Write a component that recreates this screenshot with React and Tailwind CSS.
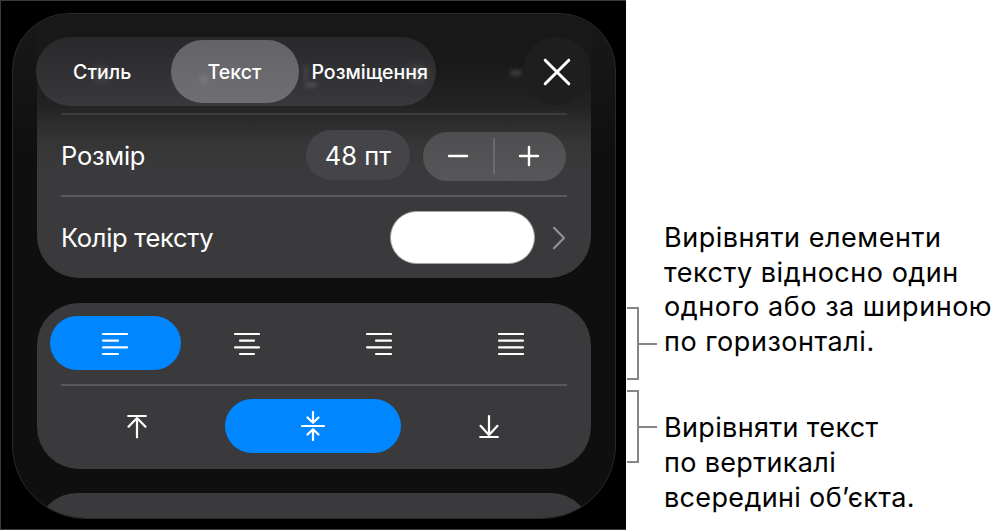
import React, { useState } from 'react';

const lineIcons = {
  left: [[1, 25], [1, 16], [1, 25], [1, 16]],
  center: [[1, 25], [6, 20], [1, 25], [6, 20]],
  right: [[1, 25], [10, 25], [1, 25], [10, 25]],
  justify: [[1, 25], [1, 25], [1, 25], [1, 25]]
};

const AlignIcon = ({ type }) => (
  <svg className="mt-px mr-0.5" width="26" height="24" viewBox="0 0 26 24" fill="none" stroke="white" strokeWidth="2.1" strokeLinecap="round">
    {lineIcons[type].map(([x1, x2], idx) => (
      <path key={idx} d={`M${x1} ${2 + idx * 6.67}H${x2}`} />
    ))}
  </svg>
);

const verticalPaths = {
  top: 'M6.2 5H23.8M15 26.3V7M6.5 15.7L15 7L23.5 15.7',
  middle: 'M4 15H26M15 1V11.5M9.5 6.5L15 11.8L20.5 6.5M15 29V18.5M9.5 23.5L15 18.2L20.5 23.5',
  bottom: 'M6.2 26H23.8M15 5V24M6.5 14.8L15 24L23.5 14.8'
};

const VerticalIcon = ({ type }) => (
  <svg width="30" height="30" viewBox="0 0 30 30" fill="none" stroke="white" strokeWidth="2.2" strokeLinecap="round" strokeLinejoin="round">
    <path d={verticalPaths[type]} />
  </svg>
);

const tabs = [
  { id: 'style', label: 'Стиль', style: 'w-[134.5px] tracking-[0.05px] pr-0.5' },
  { id: 'text', label: 'Текст', style: 'w-[128px] tracking-[0.1px]' },
  { id: 'layout', label: 'Розміщення', style: 'w-[136.5px] tracking-[0px] pl-1.5' }
];

const Bracket = () => (
  <div className="flex items-center">
    <div className="w-3 h-[73px] border-2 border-l-0 border-[#868686]" />
    <div className="w-[18px] h-0.5 bg-[#868686]" />
  </div>
);

const App = () => {
  const [tab, setTab] = useState('text');
  const [horizontal, setHorizontal] = useState('left');
  const [vertical, setVertical] = useState('middle');

  return (
    <div className="flex w-[1003px] h-[532px] bg-white overflow-hidden font-['Inter',sans-serif]">
      <div className="w-[626px] h-[530px] shrink-0 bg-black border border-r-0 border-[#3b3b3b] pl-[11px] pt-3">
        <div className="w-[604px] h-[506px] rounded-t-[57px] rounded-b-[74px] border border-[#292929] bg-[linear-gradient(#181818,#151515_60px,#0f0f0f_140px)] overflow-hidden px-6 text-white">
          {/* Header and text options */}
          <div className="h-[264px] rounded-b-[42px] bg-[linear-gradient(#181818,#191919_50px,#232323_92px,#2c2c2d_108px,#353536_128px,#3a3a3c_155px)] pt-[23px]">
            <div className="relative flex justify-between -ml-px">
              <div className="flex items-center w-[400px] h-[69px] rounded-[35px] bg-gradient-to-b from-[#29292b] to-[#39393d]">
                {tabs.map((item) => (
                  <button
                    key={item.id}
                    onClick={() => setTab(item.id)}
                    className={`relative z-10 h-[63px] shrink-0 rounded-[32px] text-[19.5px] font-medium whitespace-nowrap pt-0.5 ${item.style} ${
                      tab === item.id ? 'bg-gradient-to-b from-[#646468] to-[#6e6e73]' : ''
                    }`}
                  >
                    {item.label}
                  </button>
                ))}
              </div>
              <button className="relative z-10 flex items-center justify-center w-[68px] h-[68px] rounded-full bg-[#1e1e1f]">
                <svg className="mr-px mt-px" width="28" height="28" viewBox="0 0 28 28" fill="none" stroke="white" strokeWidth="3" strokeLinecap="round">
                  <path d="M2.2 2.2L25.8 25.8M25.8 2.2L2.2 25.8" />
                </svg>
              </button>

              {/* Scrolled content showing faintly through the bar */}
              <span className="absolute left-[57px] top-[29px] w-4 h-4 rounded-full bg-white/10 blur-[4px]" />
              <span className="absolute z-10 left-[164px] top-[38px] w-2 h-2 bg-white/10 blur-[2px]" />
              <span className="absolute left-[268px] top-[28px] w-1 h-4 bg-white/10 blur-[2px]" />
              <span className="absolute left-[269px] top-[46px] w-3 h-1 bg-white/15 blur-[2px]" />
              <span className="absolute left-[371px] top-[28px] w-5 h-4 rounded-full bg-white/10 blur-[4px]" />
              <span className="absolute left-[474px] top-[33px] w-3 h-1.5 rounded-full bg-white/15 blur-[2px]" />
            </div>

            <div className="mx-6 mt-[7px] h-0.5 bg-[#3c3c3d]" />

            <div className="mx-6 h-20 flex items-center">
              <span className="text-[25.5px] tracking-[-0.2px] pt-0.5">Розмір</span>
              <span className="ml-auto w-[104px] h-[50px] rounded-[25px] bg-[#454549] flex items-center justify-center text-[25.5px] pt-0.5">48 пт</span>
              <div className="ml-[13px] mr-px mt-0.5 w-[143px] h-[49px] rounded-[25px] bg-gradient-to-b from-[#4e4e50] to-[#575759] flex items-center">
                <button className="flex-1 flex justify-center">
                  <svg width="22" height="22" viewBox="0 0 22 22" stroke="white" strokeWidth="2.4" strokeLinecap="round">
                    <path d="M2 11H20" />
                  </svg>
                </button>
                <div className="w-0.5 h-9 bg-[#6b6b6d]" />
                <button className="flex-1 flex justify-center pr-0.5">
                  <svg width="22" height="22" viewBox="0 0 22 22" stroke="white" strokeWidth="2.4" strokeLinecap="round">
                    <path d="M2 11H20M11 2V20" />
                  </svg>
                </button>
              </div>
            </div>

            <div className="mx-6 h-0.5 bg-[#5a5a5c]" />

            <div className="mx-6 h-[81px] flex items-center">
              <span className="text-[25.5px] tracking-[-0.3px] pt-0.5">Колір тексту</span>
              <button className="ml-auto w-[145px] h-[53px] rounded-[27px] bg-white border-[1.5px] border-[#a4a4a5]" />
              <svg className="ml-[17px] mr-px" width="14" height="24" viewBox="0 0 14 24" fill="none" stroke="#929294" strokeWidth="2.2" strokeLinecap="round" strokeLinejoin="round">
                <path d="M2 1.8L12 12L2 22.2" />
              </svg>
            </div>
          </div>

          {/* Alignment */}
          <div className="mt-[25px] h-[166px] rounded-[42px] bg-[#3a3a3c] pt-[13px]">
            <div className="flex gap-px pl-[13px] pr-3.5">
              {Object.keys(lineIcons).map((type) => (
                <button
                  key={type}
                  onClick={() => setHorizontal(type)}
                  className={`flex-1 h-[54px] rounded-[27px] flex items-center justify-center ${horizontal === type ? 'bg-[#0086ff]' : ''}`}
                >
                  <AlignIcon type={type} />
                </button>
              ))}
            </div>
            <div className="mx-6 mt-3.5 mb-[13px] h-0.5 bg-[#58585a]" />
            <div className="flex pl-3 pr-3.5">
              {Object.keys(verticalPaths).map((type) => (
                <button
                  key={type}
                  onClick={() => setVertical(type)}
                  className={`flex-1 h-[54px] rounded-[27px] flex items-center justify-center ${vertical === type ? 'bg-[#0086ff]' : ''}`}
                >
                  <VerticalIcon type={type} />
                </button>
              ))}
            </div>
          </div>

          <div className="mt-6 h-20 rounded-[42px] bg-[#3a3a3c]" />
        </div>
      </div>

      {/* Callouts */}
      <div className="w-[31px] shrink-0 pl-px pt-[307px] flex flex-col gap-2.5">
        <Bracket />
        <Bracket />
      </div>
      <div className="pl-[7px] pt-[221px] text-[27px] leading-[34.7px] text-black whitespace-nowrap">
        <p className="tracking-[0.53px]">
          Вирівняти елементи<br />
          тексту відносно один<br />
          одного або за шириною<br />
          по горизонталі.
        </p>
        <p className="mt-[51.5px] tracking-[0.34px]">
          Вирівняти текст<br />
          по вертикалі<br />
          всередині об’єкта.
        </p>
      </div>
    </div>
  );
};

export default App;
